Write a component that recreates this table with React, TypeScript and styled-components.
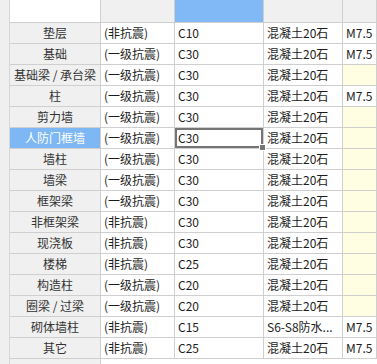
import styled, { createGlobalStyle, css } from 'styled-components';

const GlobalStyle = createGlobalStyle`
  html, body {
    margin: 0;
    padding: 0;
    background: #fff;
    overflow: hidden;
  }
  body {
    font-family: "Noto Sans CJK SC", "Noto Sans", "Liberation Sans", sans-serif;
    font-size: 12px;
    color: #1c1c1c;
  }
`;

type Row = {
  name: string;
  grade: string;
  concrete: string;
  mix?: string;
  mortar?: string;
};

const rows: Row[] = [
  { name: '垫层', grade: '(非抗震)', concrete: 'C10', mortar: 'M7.5' },
  { name: '基础', grade: '(一级抗震)', concrete: 'C30', mortar: 'M7.5' },
  { name: '基础梁 / 承台梁', grade: '(一级抗震)', concrete: 'C30' },
  { name: '柱', grade: '(一级抗震)', concrete: 'C30', mortar: 'M7.5' },
  { name: '剪力墙', grade: '(一级抗震)', concrete: 'C30' },
  { name: '人防门框墙', grade: '(一级抗震)', concrete: 'C30' },
  { name: '墙柱', grade: '(一级抗震)', concrete: 'C30' },
  { name: '墙梁', grade: '(一级抗震)', concrete: 'C30' },
  { name: '框架梁', grade: '(一级抗震)', concrete: 'C30' },
  { name: '非框架梁', grade: '(非抗震)', concrete: 'C30' },
  { name: '现浇板', grade: '(非抗震)', concrete: 'C30' },
  { name: '楼梯', grade: '(非抗震)', concrete: 'C25' },
  { name: '构造柱', grade: '(一级抗震)', concrete: 'C20' },
  { name: '圈梁 / 过梁', grade: '(一级抗震)', concrete: 'C20' },
  { name: '砌体墙柱', grade: '(非抗震)', concrete: 'C15', mix: 'S6-S8防水...', mortar: 'M7.5' },
  { name: '其它', grade: '(非抗震)', concrete: 'C25', mortar: 'M7.5' },
];

const SELECTED = 5;

const Page = styled.div`
  display: flex;
  width: 377px;
  height: 364px;
`;

const Strip = styled.div`
  width: 9px;
  flex: none;
  background: #efefef;
  border-right: 1px solid #d6d6d6;
`;

const Grid = styled.div`
  flex: 1;
  display: grid;
  grid-template-columns: 91px 74px 89px 79px 1fr;
  grid-auto-rows: 21px;
  grid-template-rows: 23px;
  align-content: start;
`;

const line = '#cfcfcf';

const HeadCell = styled.div<{ $tone: 'blank' | 'plain' | 'active' }>`
  position: relative;
  overflow: hidden;
  box-sizing: border-box;
  border-right: 1px solid ${line};
  border-bottom: 1px solid ${line};
  background: ${({ $tone }) =>
    $tone === 'blank' ? '#fff' : $tone === 'active' ? '#80b9f5' : '#f0f0f0'};
  color: ${({ $tone }) => ($tone === 'active' ? '#fff' : '#777')};
  display: flex;
  justify-content: center;
  align-items: flex-end;
`;

// header captions are scrolled up, only their lower edge peeks out
const HeadText = styled.span`
  position: relative;
  top: -21px;
  line-height: 14px;
`;

const RowHead = styled.div<{ $active?: boolean }>`
  box-sizing: border-box;
  border-right: 1px solid ${line};
  border-bottom: 1px solid ${line};
  background: ${({ $active }) => ($active ? '#7db7f4' : '#f0f0f0')};
  color: ${({ $active }) => ($active ? '#fff' : '#333')};
  display: flex;
  align-items: center;
  justify-content: center;
  white-space: nowrap;
  padding-bottom: 1px;
`;

const Cell = styled.div<{ $empty?: boolean; $focus?: boolean }>`
  position: relative;
  box-sizing: border-box;
  border-right: 1px solid ${line};
  border-bottom: 1px solid ${line};
  background: ${({ $empty }) => ($empty ? '#fffee2' : '#fff')};
  display: flex;
  align-items: center;
  padding: 0 0 1px 3px;
  white-space: nowrap;
  overflow: hidden;
  ${({ $focus }) =>
    $focus &&
    css`
      overflow: visible;
      box-shadow: inset 0 0 0 2px #757575;
      &::after {
        content: '';
        position: absolute;
        right: -3px;
        bottom: -3px;
        width: 5px;
        height: 5px;
        background: #757575;
        border: 1px solid #fff;
        z-index: 2;
      }
    `}
`;

const Filler = styled.div<{ $side?: boolean }>`
  background: ${({ $side }) => ($side ? '#f0f0f0' : '#fff')};
  border-right: ${({ $side }) => ($side ? `1px solid ${line}` : 'none')};
`;

export default function App() {
  return (
    <>
      <GlobalStyle />
      <Page>
        <Strip />
        <Grid>
          <HeadCell $tone="blank" />
          <HeadCell $tone="plain" />
          <HeadCell $tone="active">
            <HeadText>强度</HeadText>
          </HeadCell>
          <HeadCell $tone="plain">
            <HeadText>类型</HeadText>
          </HeadCell>
          <HeadCell $tone="plain" />

          {rows.map((r, i) => [
            <RowHead key={`h${i}`} $active={i === SELECTED}>
              {r.name}
            </RowHead>,
            <Cell key={`g${i}`}>{r.grade}</Cell>,
            <Cell key={`c${i}`} $focus={i === SELECTED}>
              {r.concrete}
            </Cell>,
            <Cell key={`m${i}`}>{r.mix ?? '混凝土20石'}</Cell>,
            <Cell key={`s${i}`} $empty={!r.mortar}>
              {r.mortar}
            </Cell>,
          ])}

          <Filler $side />
          <Filler />
          <Filler />
          <Filler />
          <Filler />
        </Grid>
      </Page>
    </>
  );
}
